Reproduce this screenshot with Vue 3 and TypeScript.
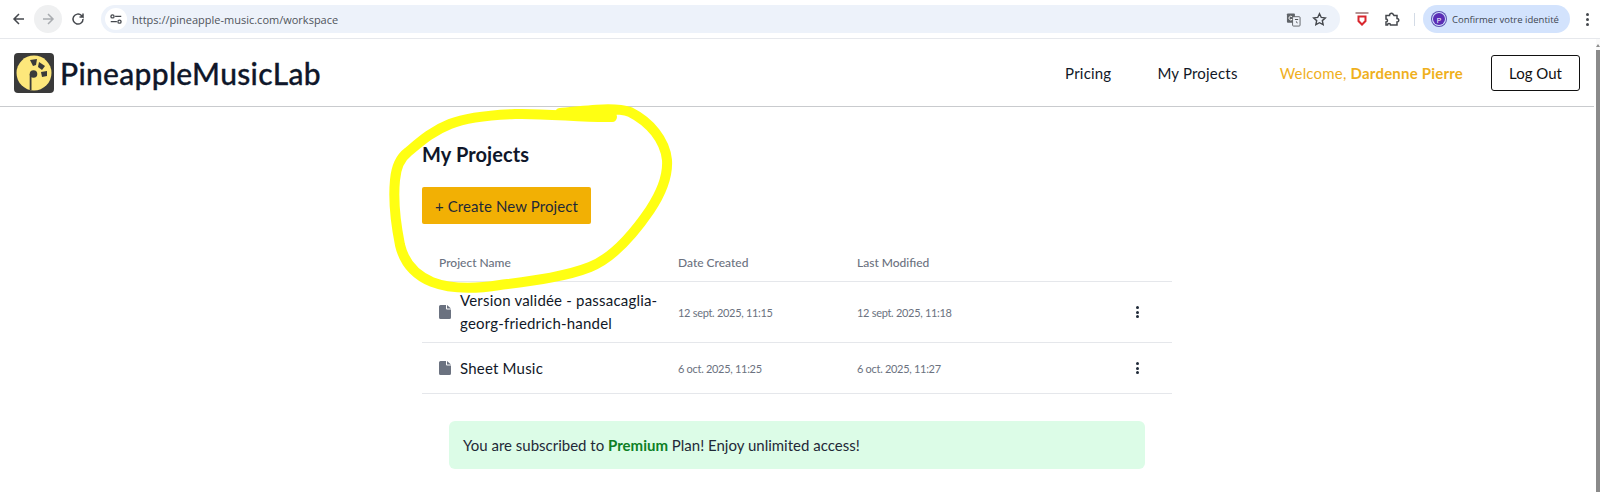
<script setup lang="ts">
interface Project {
  id: number
  name: string
  created: string
  modified: string
}

const projects: Project[] = [
  {
    id: 1,
    name: 'Version validée - passacaglia-georg-friedrich-handel',
    created: '12 sept. 2025, 11:15',
    modified: '12 sept. 2025, 11:18'
  },
  { id: 2, name: 'Sheet Music', created: '6 oct. 2025, 11:25', modified: '6 oct. 2025, 11:27' }
]
</script>

<template>
  <div class="page">
    <div class="browser-bar">
      <svg class="tool" viewBox="0 0 16 16"><path d="M13 8H3.500M8 3 3 8l5 5" /></svg>
      <span class="forward">
        <svg class="tool faded" viewBox="0 0 16 16"><path d="M3 8h9.500M8 3l5 5-5 5" /></svg>
      </span>
      <svg class="tool" viewBox="0 0 16 16"><path d="M13 8a5 5 0 1 1-1.500-3.500L13 6V2.500M13 6H9.500" /></svg>
      <div class="omnibox">
        <span class="site-icon">
          <svg viewBox="0 0 16 16" width="14" height="14"><path d="M7 5h7M2 11h7" /><circle cx="4" cy="5" r="1.800" /><circle cx="12" cy="11" r="1.800" /></svg>
        </span>
        <span class="url">https://pineapple-music.com/workspace</span>
        <svg class="omni-icon translate" viewBox="0 0 16 16">
          <rect x="1" y="1.500" width="8.500" height="10" rx="1" fill="#5f6368" stroke="none" />
          <rect x="7" y="5" width="8" height="10" rx="1" fill="#eef2f9" stroke="#5f6368" />
          <path d="M9.500 8h3.500M11 10l1 2" />
          <path class="translate-g" d="M6.500 5A2 2 0 1 0 6.500 8H5" />
        </svg>
        <svg class="omni-icon star" viewBox="0 0 16 16"><path d="m8 1.800 1.900 4 4.300.500-3.200 2.900.900 4.300L8 11.400l-3.900 2.100.900-4.300-3.200-2.900 4.300-.500z" /></svg>
      </div>
      <svg class="ext" viewBox="0 0 16 16"><path class="ext-top" d="M1.500 2h13" /><path class="ext-shield" d="M4.500 5.500h7v4.500L8 13.500 4.500 10z" /></svg>
      <svg class="tool puzzle" viewBox="0 0 16 16"><path d="M2 4.500h3.500a2 2 0 0 1 3.500-1.500l1 1.500h3v3a1.600 1.600 0 0 1 0 3.500v3H6.500a1.500 1.500 0 0 0-3 0H2v-3a1.500 1.500 0 0 0 0-3z" /></svg>
      <span class="bar-sep"></span>
      <div class="profile">
        <span class="avatar">P</span>
        <span>Confirmer votre identité</span>
      </div>
      <span class="chrome-menu"><i></i><i></i><i></i></span>
    </div>

    <header class="site-header">
      <div class="brand">
        <svg class="logo" viewBox="0 0 40 40">
          <rect width="40" height="40" rx="4" fill="#3a3a3a" />
          <circle cx="20" cy="20" r="17.500" fill="#fde77b" />
          <path d="M16 7l7-1-1 6-3 1z" fill="#3a3a3a" />
          <path d="M25 9l6 4-3 4-4-3z" fill="#3a3a3a" />
          <path d="M27 19l6-1 0 5-5 1z" fill="#3a3a3a" />
          <circle cx="19.500" cy="21" r="3.800" fill="#3a3a3a" />
          <rect x="15.700" y="21" width="1.800" height="16" fill="#3a3a3a" />
        </svg>
        <span class="brand-name">PineappleMusicLab</span>
      </div>
      <nav class="site-nav">
        <a>Pricing</a>
        <a>My Projects</a>
        <span class="welcome">Welcome, <b>Dardenne Pierre</b></span>
        <button class="logout">Log Out</button>
      </nav>
    </header>

    <main class="workspace">
      <h2>My Projects</h2>
      <button class="create">+ Create New Project</button>

      <div class="table-row table-head">
        <span>Project Name</span>
        <span>Date Created</span>
        <span>Last Modified</span>
      </div>
      <div v-for="project in projects" :key="project.id" class="table-row project-row">
        <div class="project-name">
          <svg viewBox="0 0 12 14" width="12" height="14"><path d="M1.500 0H7v3.500A1 1 0 0 0 8 4.500h4V12.500A1.500 1.500 0 0 1 10.500 14h-9A1.500 1.500 0 0 1 0 12.500v-11A1.500 1.500 0 0 1 1.500 0zM8 0l4 3.500H8z" /></svg>
          <span>{{ project.name }}</span>
        </div>
        <span class="date">{{ project.created }}</span>
        <span class="date">{{ project.modified }}</span>
        <span class="more"><i></i><i></i><i></i></span>
      </div>

      <div class="plan">
        You are subscribed to <b>Premium</b> Plan! Enjoy unlimited access!
      </div>
    </main>

    <svg class="scribble" viewBox="0 0 1600 492" width="1600" height="492">
      <path d="M612 117C585 118 545 113 515 114 490 115 465 118 450 124 432 131 420 142 408 152 400 158 396 168 395 180 393 200 396 225 400 245 404 262 415 275 432 282 450 289 475 289 500 285 530 281 565 277 590 267 615 257 635 232 650 210 662 192 668 175 667 160 665 140 650 122 630 112 615 107 590 110 560 113" />
    </svg>

    <div class="scrollbar">
      <span class="arrow"></span>
      <span class="thumb"></span>
    </div>
  </div>
</template>

<style scoped>
.page {
  position: relative;
  height: 492px;
  overflow: hidden;
  background: #fff;
  font-family: Lato, 'Open Sans', sans-serif;
  color: #111827;
}

.browser-bar {
  display: flex;
  align-items: center;
  height: 38px;
  padding-left: 11px;
  border-bottom: 1px solid #e6e8ec;
}

.browser-bar svg {
  fill: none;
  stroke: #45484d;
  stroke-width: 1.500;
}

.tool {
  width: 16px;
  height: 16px;
  flex: none;
}

.forward {
  display: flex;
  align-items: center;
  justify-content: center;
  width: 28px;
  height: 28px;
  margin: 0 8px 0 7px;
  border-radius: 50%;
  background: #eff0f1;
}

.browser-bar .faded {
  stroke: #a9acb0;
}

.omnibox {
  display: flex;
  align-items: center;
  width: 1239px;
  height: 28px;
  margin-left: 15px;
  border-radius: 14px;
  background: #edf2fa;
  flex: none;
}

.site-icon {
  display: flex;
  align-items: center;
  justify-content: center;
  width: 22px;
  height: 22px;
  margin-left: 4px;
  border-radius: 50%;
  background: #fff;
}

.url {
  margin-left: 5px;
  font-family: 'Open Sans', sans-serif;
  font-size: 11px;
  color: #50545a;
  flex: 1;
}

.omni-icon {
  width: 15px;
  height: 15px;
  flex: none;
}

.translate {
  margin-right: 11px;
}

.browser-bar .translate {
  stroke-width: 1;
}

.browser-bar .translate-g {
  stroke: #fff;
}

.star {
  margin-right: 13px;
}

.ext {
  width: 16px;
  height: 16px;
  margin-left: 14px;
  flex: none;
}

.browser-bar .ext-top {
  stroke: #9a6f6f;
}

.browser-bar .ext-shield {
  stroke: #d9272e;
  stroke-width: 2;
}

.puzzle {
  margin-left: 14px;
}

.bar-sep {
  width: 1px;
  height: 13px;
  margin: 0 8px 0 14px;
  background: #d3dbe6;
}

.profile {
  display: flex;
  align-items: center;
  gap: 7px;
  width: 147px;
  height: 28px;
  padding-left: 9px;
  border-radius: 14px;
  background: #d3e3fd;
  font-family: 'Open Sans', sans-serif;
  font-size: 9.500px;
  color: #3e4652;
  white-space: nowrap;
  box-sizing: border-box;
  flex: none;
}

.avatar {
  display: flex;
  align-items: center;
  justify-content: center;
  width: 12px;
  height: 12px;
  margin-left: 1px;
  border-radius: 50%;
  background: #5b2db5;
  box-shadow: 0 0 0 1px #d3e3fd, 0 0 0 2px #5b4fb0;
  color: #fff;
  font-size: 8px;
}

.chrome-menu {
  display: flex;
  flex-direction: column;
  gap: 2px;
  margin-left: 16px;
}

.chrome-menu i {
  width: 3px;
  height: 3px;
  border-radius: 50%;
  background: #45484d;
}

.site-header {
  display: flex;
  align-items: center;
  justify-content: space-between;
  width: 1594px;
  height: 68px;
  padding: 0 14px;
  border-bottom: 1px solid #c9cbce;
  box-sizing: border-box;
}

.brand {
  display: flex;
  align-items: center;
  gap: 6px;
}

.logo {
  width: 40px;
  height: 40px;
}

.brand-name {
  font-size: 30px;
  font-weight: 500;
  color: #0f172a;
  letter-spacing: 0.300px;
  -webkit-text-stroke: 0.300px #0f172a;
}

.site-nav {
  display: flex;
  align-items: center;
  font-size: 15px;
  letter-spacing: 0.200px;
  color: #111827;
}

.site-nav a:first-child {
  margin-right: 46px;
}

.welcome {
  margin: 0 28px 0 42px;
  color: #efb01d;
}

.logout {
  width: 89px;
  height: 36px;
  border: 1.500px solid #111;
  border-radius: 3px;
  background: #fff;
  font: inherit;
  color: #111;
}

.workspace {
  width: 750px;
  margin-left: 422px;
  padding-top: 35px;
}

h2 {
  margin: 0 0 20px;
  font-size: 20px;
  line-height: 25px;
  font-weight: 700;
  letter-spacing: 0.100px;
  color: #0f172a;
}

.create {
  display: block;
  width: 169px;
  height: 37px;
  border: 0;
  border-radius: 2px;
  background: #f2b004;
  font-family: inherit;
  font-size: 15px;
  letter-spacing: 0.100px;
  color: #1f2937;
}

.table-row {
  display: grid;
  grid-template-columns: 239px 179px 1fr 36px;
  align-items: center;
  padding-left: 17px;
  border-bottom: 1px solid #e5e7eb;
}

.table-head {
  height: 58px;
  padding-top: 20px;
  box-sizing: border-box;
  font-size: 12px;
  font-weight: 500;
  color: #6b7280;
}

.table-head span:last-child {
  grid-column: 3 / 5;
}

.project-row {
  height: 51px;
  box-sizing: border-box;
}

.project-row:nth-child(4) {
  height: 61px;
}

.project-name {
  display: flex;
  align-items: center;
  gap: 9px;
  width: 225px;
  font-size: 15px;
  line-height: 23px;
  letter-spacing: 0.200px;
  color: #111827;
}

.project-name svg {
  fill: #6b7280;
  flex: none;
}

.date {
  font-size: 11px;
  letter-spacing: -0.300px;
  color: #6b7280;
}

.more {
  display: flex;
  flex-direction: column;
  gap: 1.500px;
}

.more i {
  width: 3px;
  height: 3px;
  border-radius: 50%;
  background: #1f2937;
}

.plan {
  width: 696px;
  height: 48px;
  margin: 27px 0 0 27px;
  padding-left: 14px;
  border-radius: 6px;
  background: #dcfce7;
  box-sizing: border-box;
  font-size: 15px;
  line-height: 48px;
  color: #1f2937;
}

.plan b {
  color: #0d7f25;
}

.scribble {
  position: absolute;
  left: 0;
  top: 0;
  fill: none;
  stroke: #ffff12;
  stroke-width: 10;
  stroke-linecap: round;
  stroke-linejoin: round;
  pointer-events: none;
}

.scrollbar {
  position: absolute;
  top: 39px;
  right: 0;
  bottom: 0;
  width: 4px;
  padding-top: 5px;
  background: #fafafa;
}

.arrow {
  display: block;
  width: 0;
  margin: 0 auto;
  border: 2px solid transparent;
  border-top: 0;
  border-bottom: 3px solid #8f8f8f;
}

.thumb {
  display: block;
  height: 445px;
  margin-top: 3px;
  background: #8a8a8a;
}
</style>
